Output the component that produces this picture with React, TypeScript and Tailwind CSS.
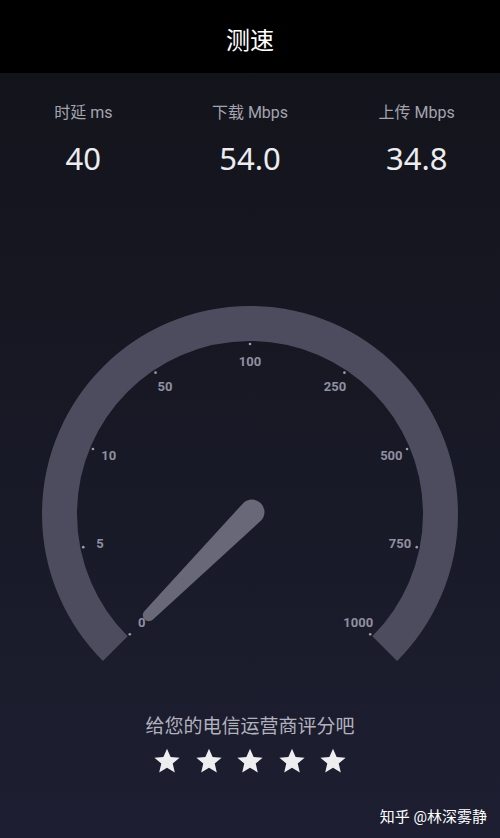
const labels = ["0", "5", "10", "50", "100", "250", "500", "750", "1000"];

const CX = 250;
const CY = 214;

function polar(r: number, deg: number) {
  const a = (deg * Math.PI) / 180;
  return { x: CX + r * Math.sin(a), y: CY - r * Math.cos(a) };
}

function Gauge() {
  const R = 190.5;
  const start = polar(R, -135);
  const end = polar(R, 135);
  return (
    <svg width="500" height="370" viewBox="0 0 500 370" className="block">
      <path
        d={`M ${start.x} ${start.y} A ${R} ${R} 0 1 1 ${end.x} ${end.y}`}
        fill="none"
        stroke="#4c4c5e"
        strokeWidth="35"
      />
      {labels.map((l, i) => {
        const deg = -135 + i * 33.75;
        const dot = polar(170, deg);
        const txt = polar(153, deg);
        return (
          <g key={l}>
            <circle cx={dot.x} cy={dot.y} r="1.3" fill="#9c9cab" />
            <text
              x={txt.x}
              y={txt.y}
              textAnchor="middle"
              dominantBaseline="central"
              fontSize="13"
              fontWeight="700"
              fill="#8f90a0"
              fontFamily="Roboto, 'Liberation Sans', sans-serif"
            >
              {l}
            </text>
          </g>
        );
      })}
      <g transform={`translate(${CX + 2} ${CY - 2}) rotate(135)`}>
        <path
          d="M 0 -12.5 L 146 -6 A 6 6 0 0 1 146 6 L 0 12.5 A 12.5 12.5 0 0 1 0 -12.5 Z"
          fill="#686878"
        />
      </g>
    </svg>
  );
}

function Star() {
  return (
    <svg width="28" height="28" viewBox="0 0 24 24">
      <path
        d="M12 1.5l3.1 7.1 7.7.6-5.9 5 1.8 7.6L12 17.8l-6.7 4 1.8-7.6-5.9-5 7.7-.6z"
        fill="#eeeef0"
      />
    </svg>
  );
}

function Stat({ label, value }: { label: string; value: string }) {
  return (
    <div className="flex flex-col items-center w-[167px]">
      <div className="text-[16px] leading-[20px] text-[#a3a4b0]">{label}</div>
      <div
        className="mt-[18px] text-[31px] leading-[34px] text-[#ececf1]"
        style={{ fontFamily: "'Noto Sans', sans-serif" }}
      >
        {value}
      </div>
    </div>
  );
}

export default function App() {
  return (
    <div
      className="w-[500px] h-[838px] flex flex-col overflow-hidden bg-gradient-to-b from-[#121319] to-[#1d1e31]"
      style={{ fontFamily: "Roboto, 'Noto Sans CJK SC', sans-serif" }}
    >
      <div className="h-[73px] bg-black flex items-center justify-center shrink-0">
        <span className="text-[24px] text-white pt-[9px]">测速</span>
      </div>
      <div className="flex pt-[30px]">
        <Stat label="时延 ms" value="40" />
        <Stat label="下载 Mbps" value="54.0" />
        <Stat label="上传 Mbps" value="34.8" />
      </div>
      <div className="mt-[125px]">
        <Gauge />
      </div>
      <div className="mt-[44px] text-center text-[19px] leading-[26px] text-[#b1b2bd]">
        给您的电信运营商评分吧
      </div>
      <div className="mt-[7px] flex justify-center gap-[13.5px]">
        <Star />
        <Star />
        <Star />
        <Star />
        <Star />
      </div>
      <div className="mt-[31px] flex justify-end pr-[13px] text-[15px] leading-[22px] text-white">
        知乎 @林深雾静
      </div>
    </div>
  );
}
